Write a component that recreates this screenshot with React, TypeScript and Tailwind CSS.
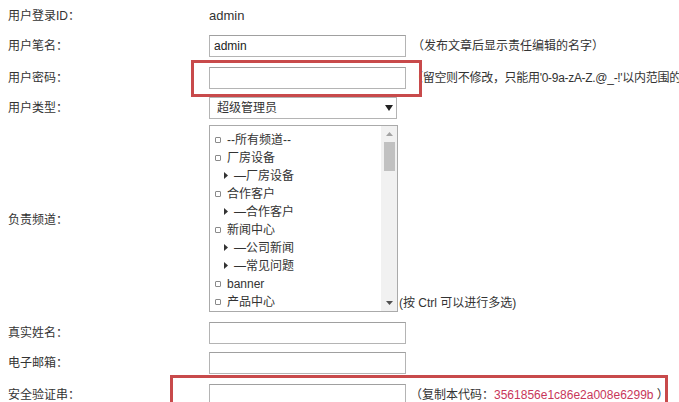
import React from "react";

const font = { fontFamily: '"Liberation Sans", "Noto Sans CJK SC", sans-serif' };

type Item = { text: string; sub?: boolean };
const items: Item[] = [
  { text: "--所有频道--" },
  { text: "厂房设备" },
  { text: "—厂房设备", sub: true },
  { text: "合作客户" },
  { text: "—合作客户", sub: true },
  { text: "新闻中心" },
  { text: "—公司新闻", sub: true },
  { text: "—常见问题", sub: true },
  { text: "banner" },
  { text: "产品中心" },
];

function Label({ children }: { children: React.ReactNode }) {
  return <div className="w-[209px] shrink-0 pl-[8px] whitespace-nowrap">{children}</div>;
}

function Input({ value }: { value?: string }) {
  return (
    <div className="w-[197px] h-[22px] shrink-0 border border-[#b4b4b4] border-t-[#a0a0a0] bg-white flex items-center px-[4px] text-[#222]">
      {value}
    </div>
  );
}

export default function App() {
  return (
    <div
      className="relative w-[679px] h-[402px] overflow-hidden bg-white text-[12px] text-[#333] leading-none"
      style={font}
    >
      <div className="flex flex-col">
        <div className="h-[31px] flex items-center">
          <Label>用户登录ID：</Label>
          <div className="text-[13px]">admin</div>
        </div>
        <div className="h-[30px] flex items-center">
          <Label>用户笔名：</Label>
          <Input value="admin" />
          <div className="ml-[6px] whitespace-nowrap">（发布文章后显示责任编辑的名字）</div>
        </div>
        <div className="h-[33px] flex items-center">
          <Label>用户密码：</Label>
          <Input />
          <div className="ml-[5px] whitespace-nowrap tracking-[-0.3px]">（留空则不修改，只能用'0-9a-zA-Z.@_-!'以内范围的</div>
        </div>
        <div className="h-[28px] flex items-center">
          <Label>用户类型：</Label>
          <div className="w-[188px] h-[22px] border border-[#b4b4b4] flex items-center justify-between pl-[7px] pr-[3px]">
            <span>超级管理员</span>
            <svg width="8" height="6" viewBox="0 0 8 6">
              <path d="M0 0 L8 0 L4 6 Z" fill="#222" />
            </svg>
          </div>
        </div>
        <div className="h-[196px] flex items-center">
          <Label>负责频道：</Label>
          <div className="flex items-end mt-[-4px]">
            <div className="w-[189px] h-[187px] border border-[#aaaaaa] flex overflow-hidden">
              <div className="flex-1 pt-[5px] flex flex-col">
                {items.map((it, i) => (
                  <div key={i} className="h-[18px] shrink-0 flex items-center whitespace-nowrap">
                    {it.sub ? (
                      <>
                        <svg className="ml-[14px]" width="4" height="7" viewBox="0 0 4 7">
                          <path d="M0 0 L4 3.5 L0 7 Z" fill="#333" />
                        </svg>
                        <span className="ml-[6px]">{it.text}</span>
                      </>
                    ) : (
                      <>
                        <span className="ml-[5px] w-[6px] h-[6px] border border-[#8a8a8a] rounded-[1px] bg-white" />
                        <span className="ml-[6px]">{it.text}</span>
                      </>
                    )}
                  </div>
                ))}
              </div>
              <div className="w-[16px] shrink-0 bg-[#f1f1f1] flex flex-col items-center">
                <div className="h-[16px] flex items-center justify-center">
                  <svg width="7" height="4" viewBox="0 0 7 4">
                    <path d="M0 4 L3.5 0 L7 4 Z" fill="#a3a3a3" />
                  </svg>
                </div>
                <div className="w-[11px] h-[29px] bg-[#c1c1c1]" />
                <div className="flex-1" />
                <div className="h-[16px] flex items-center justify-center">
                  <svg width="7" height="4" viewBox="0 0 7 4">
                    <path d="M0 0 L7 0 L3.5 4 Z" fill="#505050" />
                  </svg>
                </div>
              </div>
            </div>
            <div className="mb-[3px] ml-[1px] whitespace-nowrap">(按 Ctrl 可以进行多选)</div>
          </div>
        </div>
        <div className="h-[29px] flex items-center">
          <Label>真实姓名：</Label>
          <Input />
        </div>
        <div className="h-[32px] flex items-center">
          <Label>电子邮箱：</Label>
          <Input />
        </div>
        <div className="h-[31px] flex items-center">
          <Label>安全验证串：</Label>
          <Input />
          <div className="ml-[4px] whitespace-nowrap">
            （复制本代码：<span className="text-[#c8365a]">3561856e1c86e2a008e6299b</span> ）
          </div>
        </div>
      </div>
      <div className="absolute left-[191px] top-[60px] w-[231px] h-[37px] border-[3px] border-[#c84a4b]" />
      <div className="absolute left-[170px] top-[375px] w-[498px] h-[40px] border-[3px] border-[#c84a4b]" />
    </div>
  );
}
